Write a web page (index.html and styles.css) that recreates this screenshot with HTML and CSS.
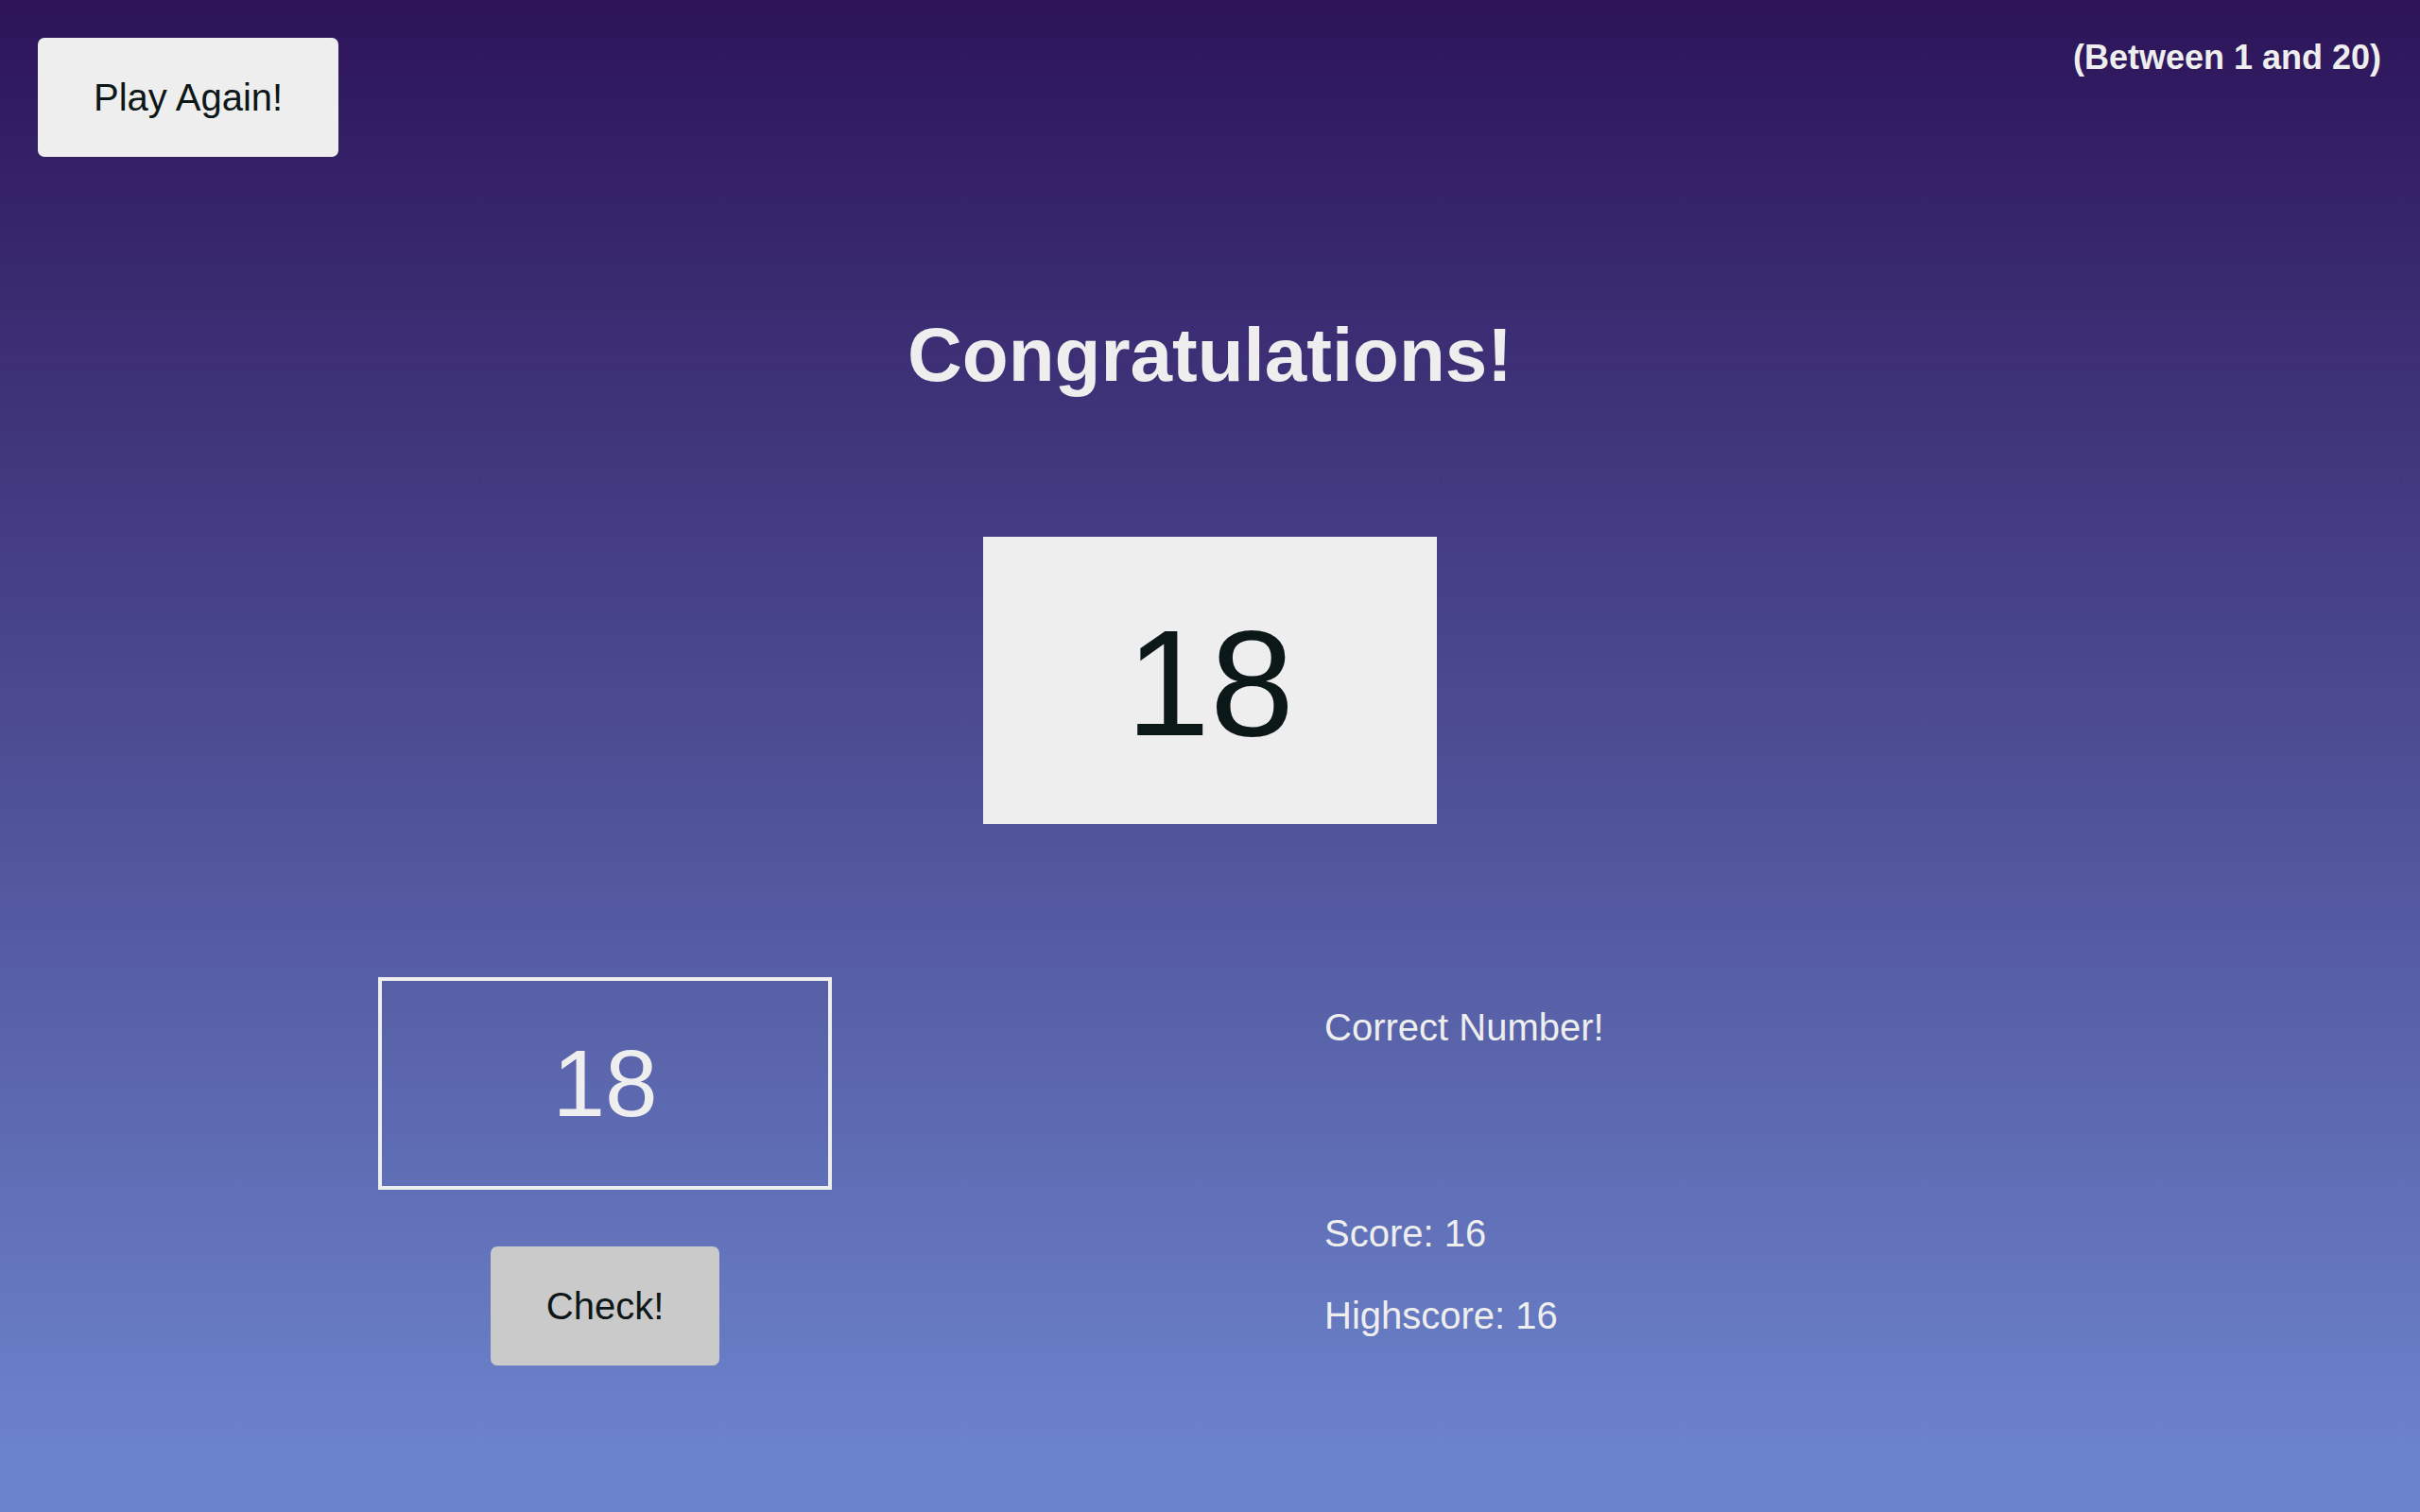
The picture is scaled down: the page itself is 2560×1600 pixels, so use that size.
FILE: index.html
```html
<!DOCTYPE html>
<html lang="en">
<head>
<meta charset="utf-8">
<title>Guess My Number!</title>
<link rel="stylesheet" href="styles.css">
</head>
<body>
<header class="top">
  <div class="top-row">
    <button class="btn again">Play Again!</button>
    <p class="between">(Between 1 and 20)</p>
  </div>
  <h1 class="title">Congratulations!</h1>
  <div class="number">18</div>
</header>
<main class="game">
  <section class="left">
    <input class="guess" type="number" value="18">
    <button class="btn check">Check!</button>
  </section>
  <section class="right">
    <p class="message">Correct Number!</p>
    <p class="label-score">Score: <span class="score">16</span></p>
    <p class="label-highscore">Highscore: <span class="highscore">16</span></p>
  </section>
</main>
</body>
</html>
```

FILE: styles.css
```css
html {
  background-color: #6b83cb;
}

body {
  margin: 0;
  min-height: 100vh;
  font-family: "Liberation Sans", Arial, sans-serif;
  color: #eeeeee;
  background: linear-gradient(to bottom, #2d1459 0px, #6b83cb 1533px);
  background-color: #6b83cb;
}

p, h1 {
  margin: 0;
}

.top-row {
  display: flex;
  justify-content: space-between;
  align-items: flex-start;
  padding: 40px 41px 0 40px;
}

.btn {
  border: none;
  border-radius: 7px;
  font-family: inherit;
  font-size: 40px;
  line-height: 46px;
  padding: 40px 59px;
  color: #0d1717;
  cursor: pointer;
}

.again {
  background-color: #eeeeee;
}

.check {
  background-color: #cacaca;
}

.between {
  font-size: 36px;
  font-weight: bold;
  line-height: 41px;
  margin-top: 0;
}

.title {
  margin-top: 164px;
  font-size: 80px;
  line-height: 92px;
  font-weight: bold;
  text-align: center;
}

.number {
  box-sizing: border-box;
  margin: 146px auto 0;
  width: 480px;
  height: 304px;
  padding-top: 6px;
  display: flex;
  align-items: center;
  justify-content: center;
  background-color: #eeeeee;
  color: #0c1818;
  font-size: 160px;
}

.game {
  margin-top: 162px;
  display: grid;
  grid-template-columns: 1280px 1fr;
}

.left {
  display: flex;
  flex-direction: column;
  align-items: center;
  gap: 60px;
}

.guess {
  box-sizing: border-box;
  width: 480px;
  height: 225px;
  border: 4px solid #eeeeee;
  background: none;
  color: #eeeeee;
  font-family: inherit;
  font-size: 100px;
  text-align: center;
  padding: 0;
  outline: none;
  -moz-appearance: textfield;
}

.guess::-webkit-inner-spin-button,
.guess::-webkit-outer-spin-button {
  -webkit-appearance: none;
  margin: 0;
}

.right {
  padding-left: 121px;
  font-size: 40px;
  line-height: 46px;
}

.message {
  margin-top: 30px;
}

.label-score {
  margin-top: 172px;
}

.label-highscore {
  margin-top: 41px;
}
```
